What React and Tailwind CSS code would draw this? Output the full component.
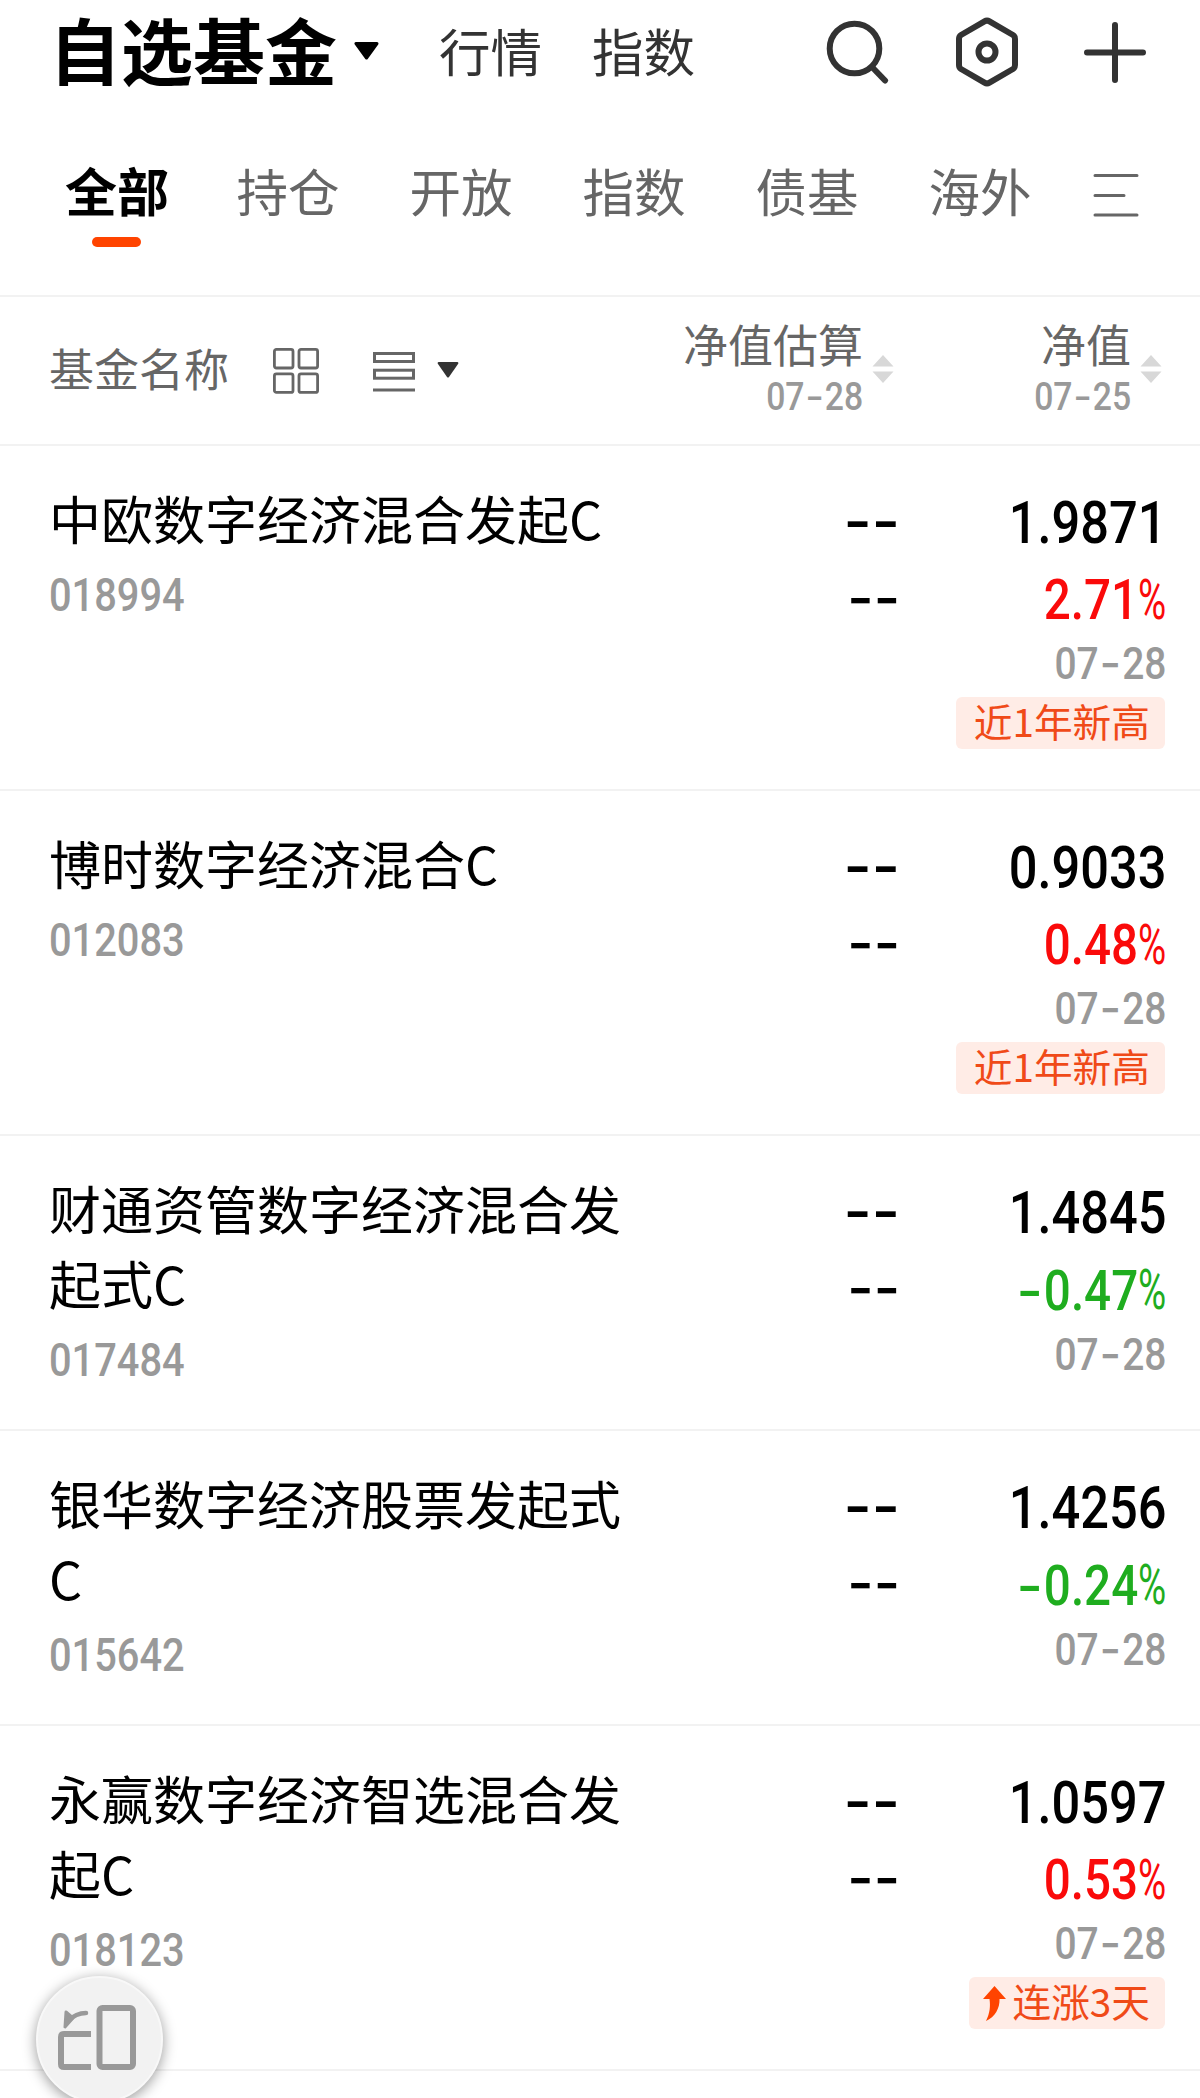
const navLinks = ['行情', '指数']
const tabs = ['全部', '持仓', '开放', '指数', '债基', '海外']

const funds = [
  { name: '中欧数字经济混合发起C', code: '018994', value: '1.9871', change: '2.71', date: '07-28', badge: '近1年新高' },
  { name: '博时数字经济混合C', code: '012083', value: '0.9033', change: '0.48', date: '07-28', badge: '近1年新高' },
  { name: '财通资管数字经济混合发起式C', code: '017484', value: '1.4845', change: '-0.47', date: '07-28' },
  { name: '银华数字经济股票发起式C', code: '015642', value: '1.4256', change: '-0.24', date: '07-28' },
  { name: '永赢数字经济智选混合发起C', code: '018123', value: '1.0597', change: '0.53', date: '07-28', badge: '连涨3天', rising: true },
]

// Condensed digits; the hyphen comes from Inter because Roboto's is too short
function Num({ children, className = '' }) {
  return (
    <span className={`block scale-x-[0.865] whitespace-nowrap font-['Roboto'] ${className}`}>
      {children.split(/(-)/).map((part, i) =>
        part === '-' ? (
          <span key={i} className="mx-[0.07em] inline-block scale-x-[1.2] font-['Inter']">-</span>
        ) : (
          part
        )
      )}
    </span>
  )
}

function Header() {
  return (
    <header className="flex h-[104px] items-center pl-[49px] pr-[54px]">
      <h1 className="-mt-[8px] text-[72px] leading-[104px] font-bold text-black">自选基金</h1>
      <svg className="-mt-[3px] ml-[17px] h-[18px] w-[25px]" viewBox="0 0 25 18">
        <path d="M2 1.5h21L12.500 16z" fill="#000" stroke="#000" strokeWidth="3" strokeLinejoin="round" />
      </svg>
      <nav className="-mt-[4px] ml-[60px] flex gap-[50px] text-[51.500px] text-[#333]">
        {navLinks.map((link) => (
          <a key={link}>{link}</a>
        ))}
      </nav>
      <div className="ml-auto flex items-center gap-[65.500px]">
        <svg className="h-[70px] w-[64px]" viewBox="0 0 64 70" fill="none" stroke="#333" strokeWidth="6" strokeLinecap="round">
          <circle cx="29.500" cy="31.500" r="24.800" />
          <path d="M47 50l13 13.500" />
        </svg>
        <svg className="h-[70px] w-[64px]" viewBox="0 0 64 70" fill="none" stroke="#333" strokeWidth="6" strokeLinejoin="round">
          <path d="M29.500 4.400q2.500-1.500 5 0L58 18q2 1.300 2 4v26q0 2.700-2 4L34.500 65.600q-2.500 1.500-5 0L6 52q-2-1.300-2-4V22q0-2.700 2-4z" />
          <circle cx="32" cy="35" r="8.500" />
        </svg>
        <svg className="h-[70px] w-[62px]" viewBox="0 0 62 70" stroke="#333" strokeWidth="6" strokeLinecap="round">
          <path d="M3 35.500h56M31 8v55" />
        </svg>
      </div>
    </header>
  )
}

function Tabs() {
  return (
    <div className="flex h-[191px] pt-[59px] pl-[63px]">
      <div className="flex gap-[69px]">
        {tabs.map((tab, i) => (
          <div key={tab} className="flex w-[104px] flex-col items-center">
            <span className={i === 0 ? '-mr-[4px] text-[52px] leading-[54px] font-bold text-black' : 'text-[51.500px] leading-[54px] text-[#666]'}>
              {tab}
            </span>
            {i === 0 && <span className="-mr-[2px] mt-[20px] h-[10px] w-[49px] rounded-full bg-[#ff4400]" />}
          </div>
        ))}
      </div>
      <svg className="mt-[10px] ml-[60px] h-[44px] w-[47px]" viewBox="0 0 47 44" stroke="#666" strokeWidth="3" strokeLinecap="round">
        <path d="M3 2.500h42M3 22.500h29M3 42h42" />
      </svg>
    </div>
  )
}

function SortIcon() {
  return (
    <svg className="mt-[33px] h-[28px] w-[22px]" viewBox="0 0 22 28" fill="#d8d8d8">
      <path d="M11 0l10.500 11.500h-21zM11 28L.5 16.500h21z" />
    </svg>
  )
}

function ColumnTitle({ title, date, className }) {
  return (
    <div className={`flex ${className}`}>
      <div className="mr-[9px] flex flex-1 flex-col items-end">
        <span className="mt-[-3px] text-[45px] leading-[50px] text-[#666]">{title}</span>
        <Num className="mt-[6px] origin-right text-[39px] leading-[42px] font-medium text-[#999]">{date}</Num>
      </div>
      <SortIcon />
    </div>
  )
}

function TableHead() {
  return (
    <div className="flex h-[151px] border-y-2 border-[#f2f2f2] pl-[49px]">
      <div className="flex h-[148px] items-center">
        <span className="-mt-[6px] text-[45px] text-[#666]">基金名称</span>
        <svg className="ml-[44px] h-[46px] w-[46px]" viewBox="0 0 46 46" fill="none" stroke="#666" strokeWidth="2.800">
          <rect x="1.400" y="1.400" width="18.600" height="18.600" rx="2" />
          <rect x="26" y="1.400" width="18.600" height="18.600" rx="2" />
          <rect x="1.400" y="25.800" width="18.600" height="18.600" rx="2" />
          <rect x="26" y="25.800" width="18.600" height="18.600" rx="2" />
        </svg>
        <svg className="mt-[2px] ml-[54px] h-[40px] w-[42px]" viewBox="0 0 42 40" fill="none" stroke="#666" strokeWidth="3">
          <rect x="1.500" y="1.500" width="39" height="8" />
          <rect x="1.500" y="18.200" width="39" height="8" />
          <path d="M0 38h42" />
        </svg>
        <svg className="-mt-[3px] ml-[22px] h-[16px] w-[22px]" viewBox="0 0 22 16" fill="#333">
          <path d="M1.500 0h19q1.500.5.500 2L12 15q-1 1.200-2 0L1 2Q0 .5 1.500 0z" />
        </svg>
      </div>
      <ColumnTitle title="净值估算" date="07-28" className="ml-auto mt-[25px]" />
      <ColumnTitle title="净值" date="07-25" className="mt-[25px] mr-[38px] w-[268px]" />
    </div>
  )
}

function Badge({ text, rising }) {
  return (
    <span className="mt-[9px] flex h-[52px] items-center rounded-[6px] bg-[#ffece6] pr-[15px] pl-[18px] text-[38.700px] text-[#f04a18]">
      {rising && (
        <svg className="mr-[6px] -ml-[4px] h-[35px] w-[23px]" viewBox="0 0 23 35" fill="#ff4400">
          <path d="M11.500 0L23 13h-6.500C17 22 12 31 3 35c4-8 4.500-15 3.500-22H0z" />
        </svg>
      )}
      <span className="-mt-[6px] leading-[46px]">{text}</span>
    </span>
  )
}

function FundRow({ fund }) {
  const down = fund.change.startsWith('-')
  return (
    <div className={`flex border-b-2 border-[#f2f2f2] pl-[49px] pr-[35px] ${fund.badge ? 'h-[345px]' : 'h-[295px]'}`}>
      <div className="w-[591px] pt-[34px]">
        <div className="text-[52px] leading-[75px] text-black">{fund.name}</div>
        <Num className="mt-[3px] origin-left text-[46px] leading-[75px] font-medium text-[#999]">{fund.code}</Num>
      </div>
      <div className="-mr-[3px] flex flex-1 flex-col items-end pt-[36px] font-['Inter'] font-medium text-black">
        <span className="text-[61px] leading-[78px]">--</span>
        <span className="-mt-px text-[57px] leading-[78px]">--</span>
      </div>
      <div className="flex w-[268px] flex-col items-end pt-[38px]">
        <Num className="-mr-px origin-right text-[58.500px] leading-[78px] font-medium text-black">{fund.value}</Num>
        <div className={`-mt-px flex text-[55px] leading-[78px] ${down ? 'text-[#1fad1f]' : 'text-[#fa0a0a]'}`}>
          <Num className="origin-right font-medium">{fund.change}</Num>
          <span className="w-[27px] origin-left scale-x-[0.7] font-['Roboto']">%</span>
        </div>
        <Num className="-mr-px origin-right text-[45px] leading-[48px] font-medium text-[#999]">{fund.date}</Num>
        {fund.badge && <Badge text={fund.badge} rising={fund.rising} />}
      </div>
    </div>
  )
}

function FloatingButton() {
  return (
    <button className="absolute top-[1976px] left-[36px] flex h-[127px] w-[127px] items-center justify-center rounded-full border-2 border-[#f8f8f8] bg-[#f2f2f2] shadow-[0_3px_14px_rgba(0,0,0,0.4)]">
      <svg className="mr-[5px] mb-[3px] h-[66px] w-[78px]" viewBox="0 0 78 66" fill="none" stroke="#999" strokeWidth="6">
        <rect x="41.500" y="3" width="33.500" height="59" rx="3" />
        <path d="M33 29H6q-3 0-3 3v27q0 3 3 3h27" />
        <path d="M28 8q-10 0-18 8" strokeWidth="4.500" strokeLinecap="round" />
        <path d="M8 7l7 6-8 9z" fill="#999" strokeWidth="3" strokeLinejoin="round" />
      </svg>
    </button>
  )
}

export default function App() {
  return (
    <div lang="zh-CN" className="relative h-[2098px] w-[1200px] overflow-hidden bg-white font-['Noto_Sans_CJK_SC',sans-serif]">
      <Header />
      <Tabs />
      <TableHead />
      {funds.map((fund) => (
        <FundRow key={fund.code} fund={fund} />
      ))}
      <FloatingButton />
    </div>
  )
}
